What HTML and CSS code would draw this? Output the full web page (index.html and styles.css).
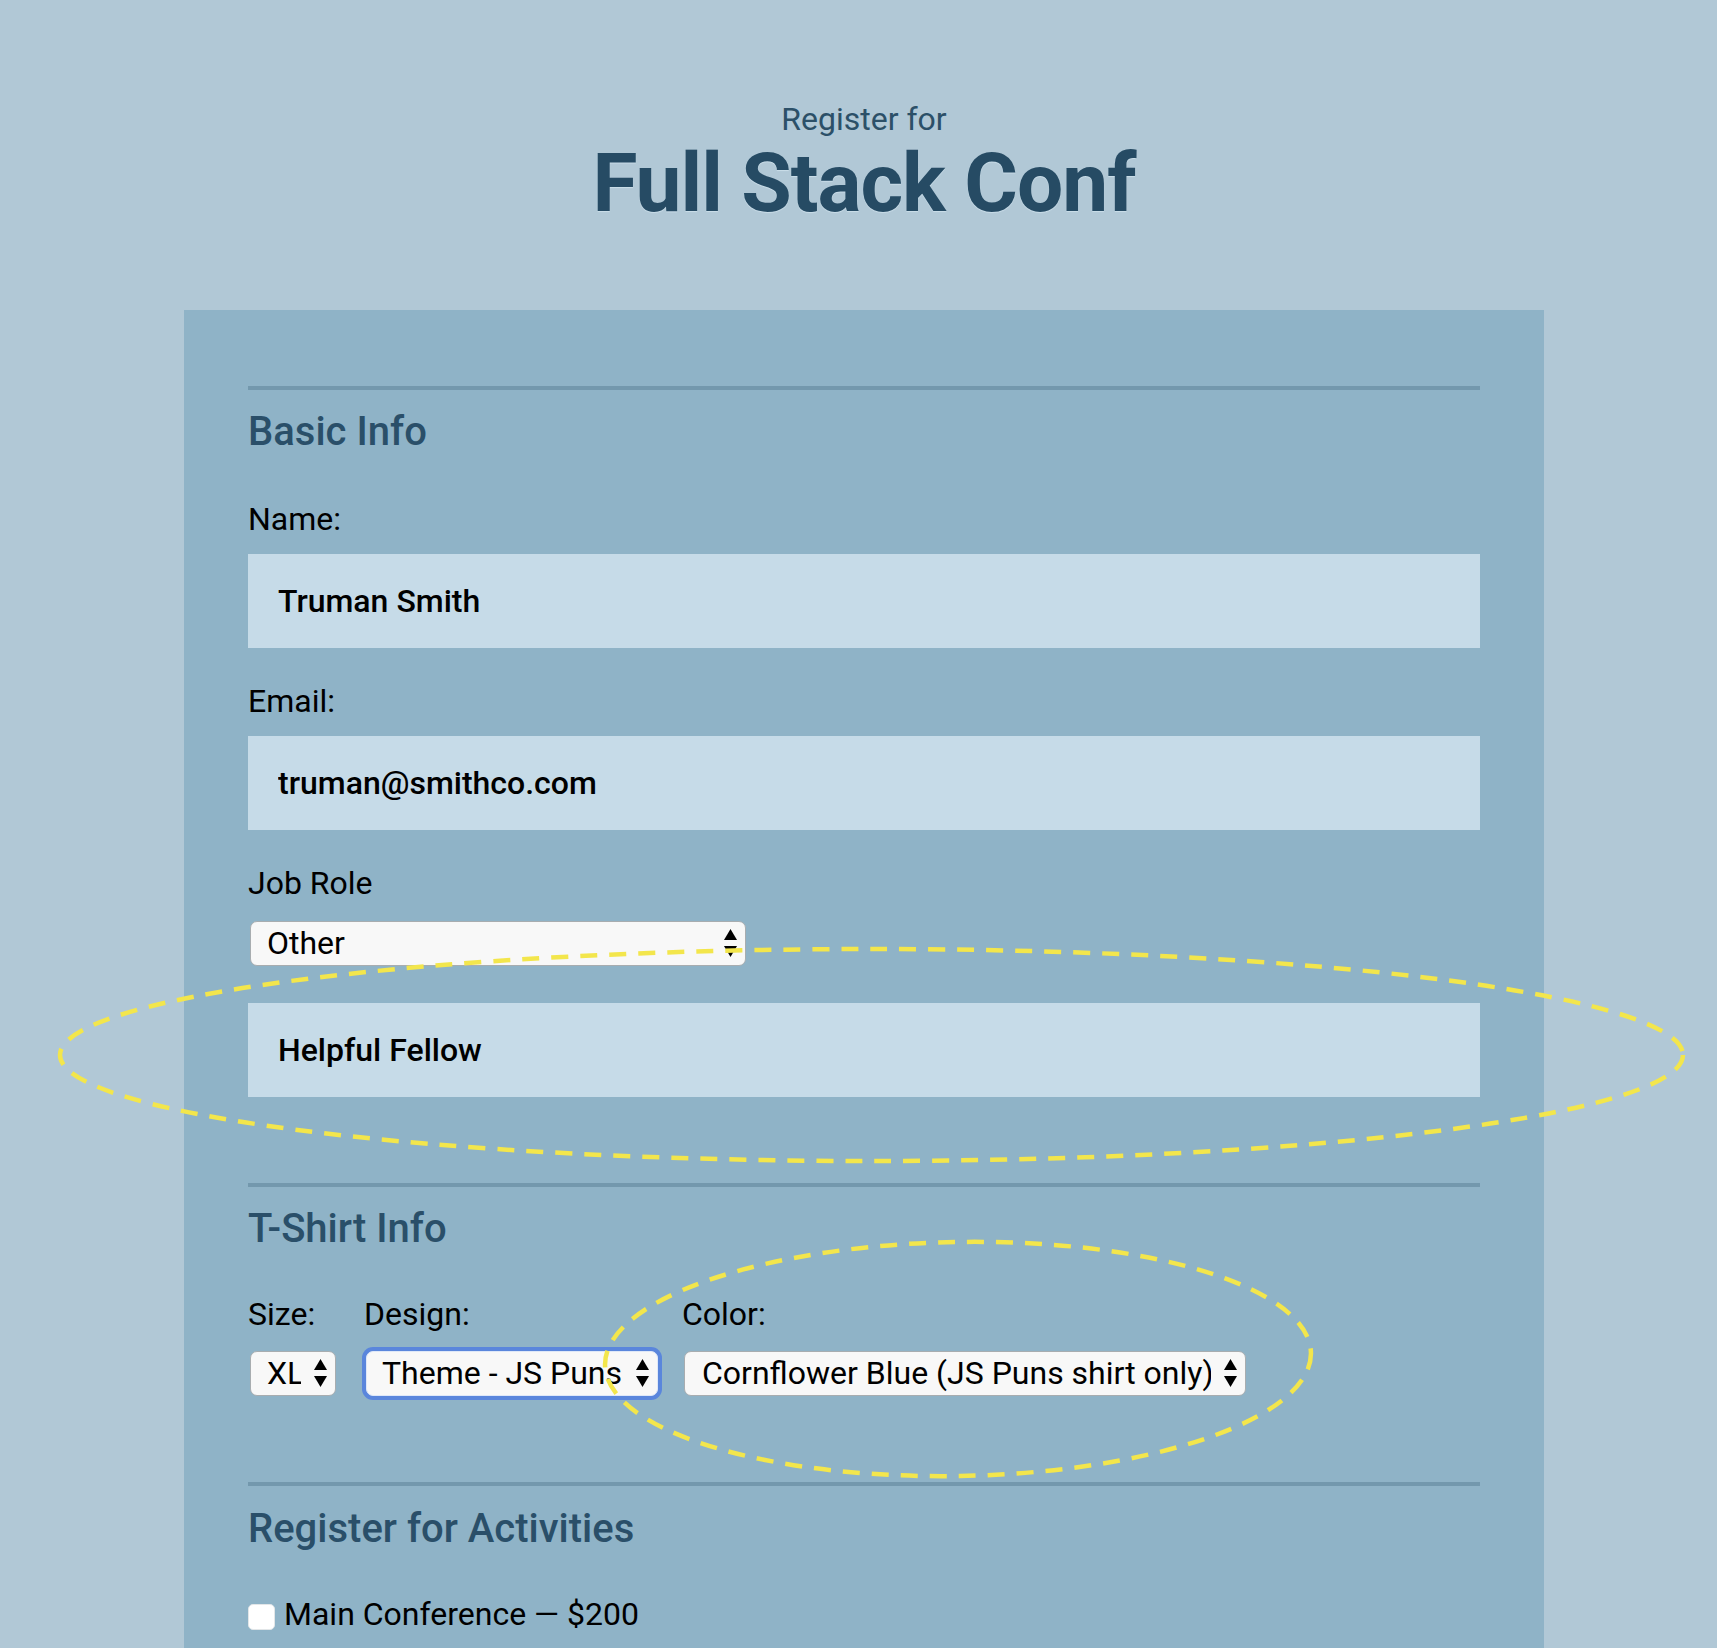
FILE: index.html
```html
<!DOCTYPE html>
<html lang="en">
<head>
<meta charset="utf-8">
<title>Register for Full Stack Conf</title>
<link rel="stylesheet" href="styles.css">
</head>
<body>
<div class="page">
  <header class="masthead">
    <span class="kicker">Register for</span>
    <h1 class="title">Full Stack Conf</h1>
  </header>

  <form class="card">
    <fieldset class="section">
      <h2 class="section-title">Basic Info</h2>

      <label class="field-label first" for="name">Name:</label>
      <input class="text-input" id="name" type="text" value="Truman Smith">

      <label class="field-label" for="mail">Email:</label>
      <input class="text-input" id="mail" type="email" value="truman@smithco.com">

      <label class="field-label" for="title">Job Role</label>
      <span class="select-wrap select-job">
        <select id="title" class="select"><option>Other</option></select>
        <svg class="arrows" viewBox="0 0 15 30" width="15" height="30" aria-hidden="true"><polygon points="7.5,1 14,12 1,12"/><polygon points="1,18 14,18 7.5,29"/></svg>
      </span>

      <input class="text-input other-input" id="other-title" type="text" value="Helpful Fellow">
    </fieldset>

    <fieldset class="section">
      <h2 class="section-title">T-Shirt Info</h2>
      <div class="shirt-row">
        <div class="shirt-col col-size">
          <label class="field-label" for="size">Size:</label>
          <span class="select-wrap select-size">
            <select id="size" class="select"><option>XL</option></select>
            <svg class="arrows" viewBox="0 0 15 30" width="15" height="30" aria-hidden="true"><polygon points="7.5,1 14,12 1,12"/><polygon points="1,18 14,18 7.5,29"/></svg>
          </span>
        </div>
        <div class="shirt-col col-design">
          <label class="field-label" for="design">Design:</label>
          <span class="select-wrap select-design">
            <select id="design" class="select focused"><option>Theme - JS Puns</option></select>
            <svg class="arrows" viewBox="0 0 15 30" width="15" height="30" aria-hidden="true"><polygon points="7.5,1 14,12 1,12"/><polygon points="1,18 14,18 7.5,29"/></svg>
          </span>
        </div>
        <div class="shirt-col col-color">
          <label class="field-label" for="color">Color:</label>
          <span class="select-wrap select-color">
            <select id="color" class="select"><option>Cornflower Blue (JS Puns shirt only)</option></select>
            <svg class="arrows" viewBox="0 0 15 30" width="15" height="30" aria-hidden="true"><polygon points="7.5,1 14,12 1,12"/><polygon points="1,18 14,18 7.5,29"/></svg>
          </span>
        </div>
      </div>
    </fieldset>

    <fieldset class="section last">
      <h2 class="section-title">Register for Activities</h2>
      <label class="activity">
        <input class="check" type="checkbox" name="all">
        <span>Main Conference — $200</span>
      </label>
    </fieldset>
  </form>
</div>

<svg class="annotations" width="1717" height="1648" viewBox="0 0 1717 1648" aria-hidden="true">
  <ellipse cx="871.5" cy="1055" rx="811.5" ry="106"/>
  <ellipse cx="958" cy="1359" rx="353" ry="117" transform="rotate(-1 958 1359)"/>
</svg>
</body>
</html>
```

FILE: styles.css
```css
* {
  box-sizing: border-box;
}

html,
body {
  margin: 0;
  height: 1648px;
  overflow: hidden;
}

body {
  position: relative;
  background: #b1c8d6;
  font-family: Roboto, "Liberation Sans", Arial, sans-serif;
  color: #000;
  padding-left: 11px;
}

.page {
  width: 1360px;
  margin: 0 auto;
}

.masthead {
  padding-top: 101px;
  margin-bottom: 85px;
  text-align: center;
  color: #264b64;
}

.kicker {
  display: block;
  font-size: 32px;
  line-height: 36px;
  font-weight: 400;
  color: #2c5068;
}

.title {
  margin: 4px 0 0;
  font-size: 82px;
  line-height: 84px;
  font-weight: 700;
  letter-spacing: -1px;
  color: #264b64;
  text-shadow: 0 1px 1px rgba(220, 236, 246, 0.6);
}

.card {
  background: #8fb3c7;
  padding: 76px 64px 40px;
}

.section {
  margin: 0 0 86px;
  padding: 18px 0 0;
  border: 0;
  border-top: 4px solid #7398ad;
  min-width: 0;
  display: flex;
  flex-direction: column;
  align-items: flex-start;
}

.section.last {
  padding-top: 19px;
  margin-bottom: 0;
}

.section-title {
  margin: 0;
  font-size: 40px;
  line-height: 48px;
  font-weight: 500;
  color: #2a4f69;
}

.field-label {
  display: block;
  margin-top: 35px;
  font-size: 32px;
  line-height: 36px;
  font-weight: 400;
  color: #000;
}

.field-label.first {
  margin-top: 45px;
}

.text-input {
  display: block;
  width: 100%;
  height: 94px;
  margin-top: 17px;
  padding: 0 30px;
  border: 0;
  background: #c6dbe8;
  font-family: Roboto, "Liberation Sans", Arial, sans-serif;
  font-size: 32px;
  font-weight: 500;
  color: #000;
  outline: none;
}

.text-input.other-input {
  margin-top: 37px;
}

.select-wrap {
  position: relative;
  display: block;
  margin-top: 20px;
  margin-left: 2px;
  height: 45px;
}

.select {
  -webkit-appearance: none;
  appearance: none;
  display: block;
  width: 100%;
  height: 45px;
  margin: 0;
  padding: 0 34px 0 16px;
  border: 1px solid #a8adb0;
  border-radius: 7px;
  background: #f8f8f8;
  font-family: Roboto, "Liberation Sans", Arial, sans-serif;
  font-size: 32px;
  line-height: 43px;
  color: #000;
  outline: none;
}

.select.focused {
  border: 1px solid #dfe8f8;
  padding-left: 15px;
  box-shadow: 0 0 0 4px #5a86dc;
}

.arrows {
  position: absolute;
  right: 8px;
  top: 7px;
  fill: #000;
  pointer-events: none;
}

.select-job {
  width: 496px;
}

.shirt-row {
  display: flex;
  margin-top: 43px;
}

.shirt-col {
  display: flex;
  flex-direction: column;
}

.col-size {
  margin-right: 28px;
}

.col-design {
  margin-right: 24px;
}

.shirt-col .field-label {
  margin-top: 0;
}

.shirt-col .select-wrap {
  margin-top: 19px;
}

.select-size {
  width: 86px;
}

.select-design {
  width: 292px;
}

.select-color {
  width: 562px;
}

.select-color .select {
  padding-left: 17px;
}

.activity {
  display: flex;
  align-items: flex-start;
  gap: 9px;
  margin-top: 43px;
  font-size: 32px;
  line-height: 36px;
}

.check {
  -webkit-appearance: none;
  appearance: none;
  width: 27px;
  height: 26px;
  margin: 8px 0 0;
  border: 1px solid #e2e6e8;
  border-radius: 5px;
  background: #fff;
}

.annotations {
  position: absolute;
  left: 0;
  top: 0;
  pointer-events: none;
  fill: none;
  stroke: #f3e64c;
  stroke-width: 4.5;
  stroke-dasharray: 17 12;
}
```
